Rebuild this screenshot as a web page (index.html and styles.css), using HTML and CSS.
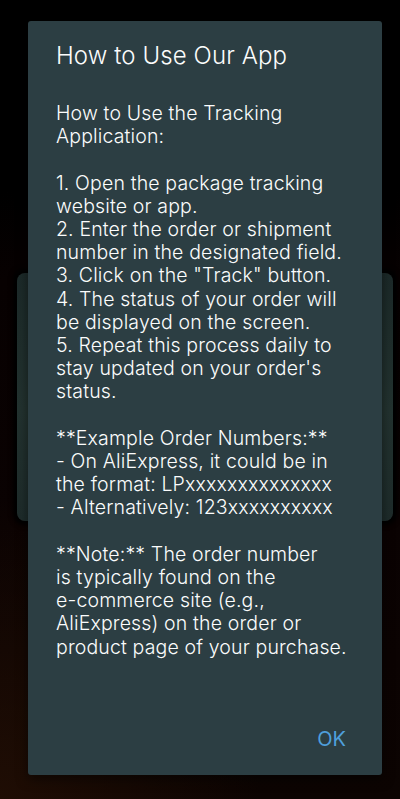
FILE: index.html
```html
<!DOCTYPE html>
<html lang="en">
<head>
    <meta charset="UTF-8">
    <meta name="viewport" content="width=device-width, initial-scale=1.0">
    <title>How to Use Our App</title>
    <link rel="stylesheet" href="styles.css">
</head>
<body>
    <!-- Screen behind the dialog -->
    <div class="backdrop">
        <div class="back-card"></div>
    </div>

    <!-- Dialog -->
    <div class="dialog">
        <h2 class="dialog-title">How to Use Our App</h2>
        <div class="dialog-text">
            <p>How to Use the Tracking<br>Application:</p>
            <p>1. Open the package tracking<br>website or app.<br>2. Enter the order or shipment<br>number in the designated field.<br>3. Click on the "Track" button.<br>4. The status of your order will<br>be displayed on the screen.<br>5. Repeat this process daily to<br>stay updated on your order's<br>status.</p>
            <p>**Example Order Numbers:**<br>- On AliExpress, it could be in<br>the format: LPxxxxxxxxxxxxxx<br>- Alternatively: 123xxxxxxxxxx</p>
            <p>**Note:** The order number<br>is typically found on the<br>e-commerce site (e.g.,<br>AliExpress) on the order or<br>product page of your purchase.</p>
        </div>
        <div class="dialog-actions">
            <button class="ok-button">OK</button>
        </div>
    </div>
</body>
</html>
```

FILE: styles.css
```css
* {
    box-sizing: border-box;
    margin: 0;
    padding: 0;
}

body {
    font-family: "Inter", "Noto Sans", sans-serif;
    background: radial-gradient(ellipse 260px 300px at 0 799px, #1f0d04 0%, rgba(31, 13, 4, 0) 100%),
        linear-gradient(to bottom, #000000 0%, #000000 24%, #070101 35%, #0a0202 65%, #0c0402 100%);
    width: 400px;
    height: 799px;
    overflow: hidden;
    position: relative;
}

.backdrop {
    position: absolute;
    inset: 0;
}

.back-card {
    position: absolute;
    left: 17px;
    top: 273px;
    width: 376px;
    height: 248px;
    background: linear-gradient(to bottom, #1c2a29 0%, #233330 55%, #1e2c2b 100%);
    border-radius: 8px;
    box-shadow: 0 0 5px 4px #000000;
}

.dialog {
    position: absolute;
    left: 28px;
    top: 21px;
    width: 354px;
    height: 754px;
    background-color: #2c3e43;
    border-radius: 3px;
    box-shadow: 0 4px 12px rgba(0, 0, 0, 0.5);
    padding: 20px 28px 0;
    display: flex;
    flex-direction: column;
    color: #fbfcfc;
}

.dialog-title {
    font-size: 24px;
    font-weight: 300;
    letter-spacing: 0.1px;
    line-height: 30px;
    margin-bottom: 31px;
}

.dialog-text {
    font-size: 19.5px;
    font-weight: 300;
    letter-spacing: 0.15px;
    line-height: 23.2px;
    flex: 1;
    white-space: nowrap;
}

.dialog-text p {
    margin-bottom: 23.2px;
}

.dialog-actions {
    display: flex;
    justify-content: flex-end;
    padding: 0 8px 24px 0;
}

.ok-button {
    background: none;
    border: none;
    color: #4f9fdc;
    font-family: inherit;
    font-size: 20px;
    font-weight: 400;
    line-height: 24px;
}
```
